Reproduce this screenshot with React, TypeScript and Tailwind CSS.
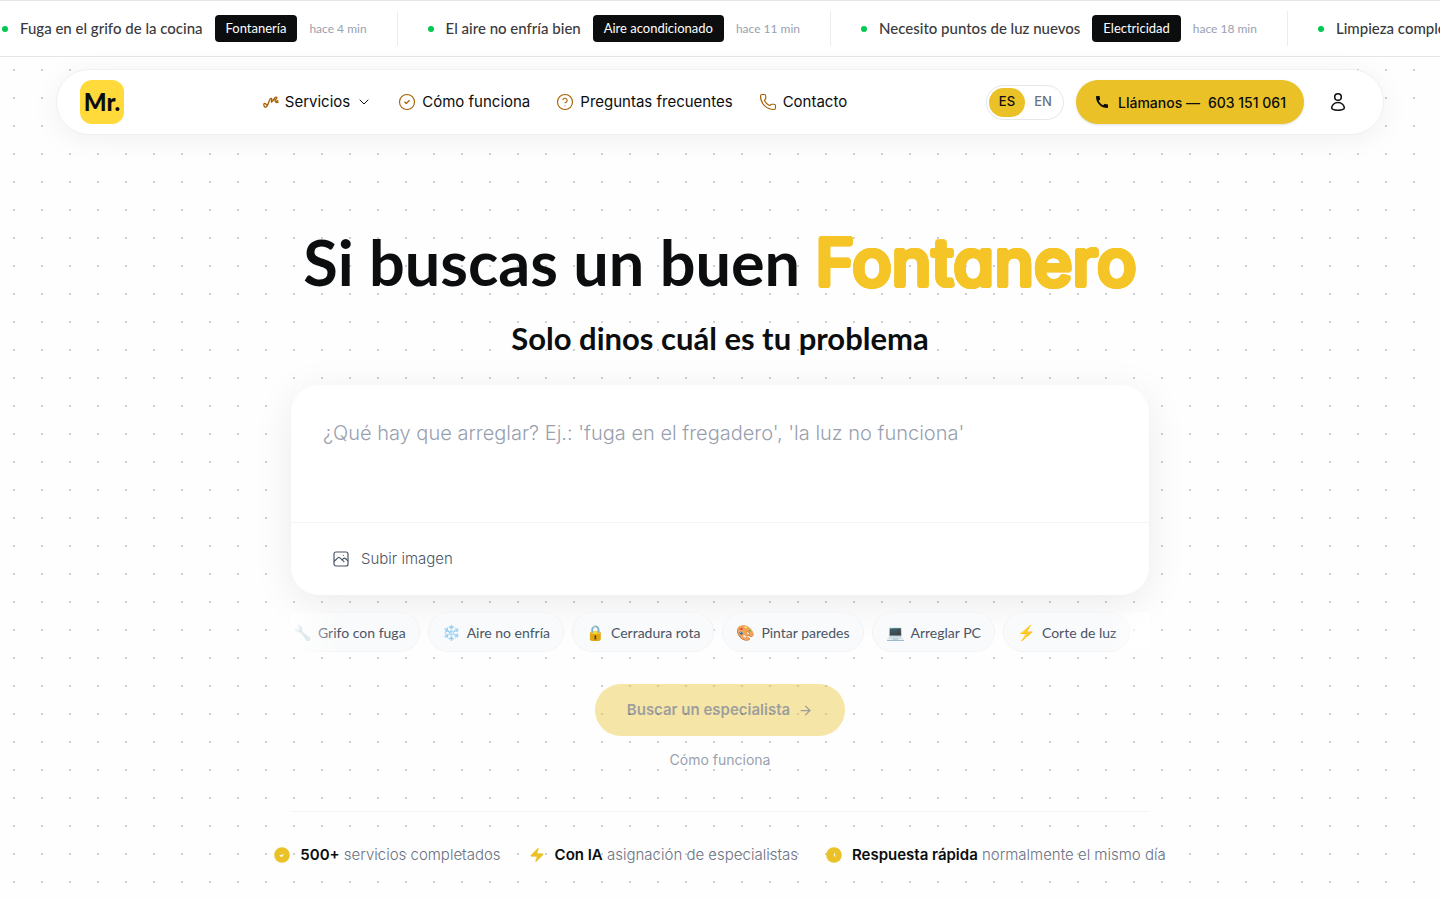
import React, { useState } from 'react';
import { ArrowRight, ChevronDown, CircleCheck, CircleQuestionMark, Phone, Zap } from 'lucide-react';
import { MdCall } from 'react-icons/md';

interface Request {
  title: string;
  service: string;
  time: string;
}

const requests: Request[] = [
  { title: 'Fuga en el grifo de la cocina', service: 'Fontanería', time: 'hace 4 min' },
  { title: 'El aire no enfría bien', service: 'Aire acondicionado', time: 'hace 11 min' },
  { title: 'Necesito puntos de luz nuevos', service: 'Electricidad', time: 'hace 18 min' },
  { title: 'Limpieza completa del piso', service: 'Limpieza', time: 'hace 25 min' },
];

const suggestions = [
  { emoji: '🔧', label: 'Grifo con fuga' },
  { emoji: '❄️', label: 'Aire no enfría' },
  { emoji: '🔒', label: 'Cerradura rota' },
  { emoji: '🎨', label: 'Pintar paredes' },
  { emoji: '💻', label: 'Arreglar PC' },
  { emoji: '⚡', label: 'Corte de luz' },
];

const ToolsIcon = () => (
  <svg width="16" height="16" viewBox="0 0 16 16" fill="none" stroke="currentColor" strokeWidth="1.3" strokeLinecap="round" strokeLinejoin="round">
    <path d="M1.200 9.600c1-.900 1.900 1.500 3.100 1.200M1 9.600c-.500 2 .300 3.600 1.700 3.500 2.600-.200 2.500-5.900 4.700-8.300.700-.700 1.500-.400 1.400.500 0 .700-.600 1.800-.300 2.700" />
    <path d="M8.500 8c1.900-.600 2.500-4.400 4.200-4.900 1.200-.300 1.500 1 .7 1.700-.8.600-1.600.9-1.500 1.700.2 1 1.700.9 2.900.2M12.300 7.200c.2 1.200 1.500 1.700 2.800.9" />
  </svg>
);

const UserIcon = () => (
  <svg width="20" height="20" viewBox="0 0 20 20" fill="none" stroke="currentColor" strokeWidth="1.5" strokeLinejoin="round">
    <circle cx="10" cy="5" r="3.3" />
    <path d="M10 10.6c3.7 0 6.3 2.6 6.3 5.2 0 1.500-2.800 2.400-6.300 2.400s-6.300-.900-6.300-2.400c0-2.600 2.600-5.200 6.300-5.200Z" />
  </svg>
);

const ImageIcon = () => (
  <svg width="20" height="20" viewBox="0 0 20 20" fill="none" stroke="currentColor" strokeWidth="1.2" strokeLinecap="round" strokeLinejoin="round">
    <rect x="3" y="3" width="14" height="14" rx="2" />
    <path d="m3.500 12 3.700-3.400c.5-.4 1-.4 1.400 0l4.400 4M11.300 11.200c.9-2 2-2.600 3.400-1.400l2 1.800" />
    <path d="M12.400 6.500h.01" />
  </svg>
);

const SealIcon = () => (
  <svg width="16" height="16" viewBox="0 0 16 16">
    <circle cx="8" cy="8" r="7.8" fill="#eac126" />
    <path d="m5.400 8.500 1.300-.8.8.6 3-2-2.400 3.500-1.100.3Z" fill="#fff" />
  </svg>
);

const ClockIcon = () => (
  <svg width="16" height="16" viewBox="0 0 16 16">
    <circle cx="8" cy="8" r="7.8" fill="#eac126" />
    <path d="m8.200 5.200.9 2.500.4 2.800-1.800-2.400Z" fill="#fff" />
  </svg>
);

const stats = [
  { icon: <SealIcon />, strong: '500+', text: 'servicios completados' },
  { icon: <Zap size={16} className="fill-[#eac126] text-[#eac126]" strokeWidth={1} />, strong: 'Con IA', text: 'asignación de especialistas' },
  { icon: <ClockIcon />, strong: 'Respuesta rápida', text: 'normalmente el mismo día' },
];

const Ticker = () => (
  <div className="overflow-hidden border-y border-[#e5e5e5] bg-white font-['Lato',sans-serif]">
    <ul className="-ml-7 flex h-[55px] w-max items-center">
      {requests.map((item) => (
        <li key={item.title} className="flex h-[35px] items-center gap-3 border-r border-[#ececec] px-[30px]">
          <span className="size-1.5 shrink-0 rounded-full bg-[#00c950]" />
          <span className="text-[15px] font-medium text-[#3a3a3c]">{item.title}</span>
          <span className="rounded bg-[#0b0d0e] px-[11px] py-1 text-[13px] leading-[19px] text-white">{item.service}</span>
          <span className="text-[12px] text-[#99a1af]">{item.time}</span>
        </li>
      ))}
    </ul>
  </div>
);

const Header = () => {
  const [lang, setLang] = useState('ES');

  return (
    <header className="mx-14 mt-3 flex h-[66px] items-center justify-between rounded-full border border-[#f0f0f2] bg-white px-[23px] shadow-[0_4px_30px_rgba(0,0,0,0.06)]">
      <a href="#" className="flex size-11 items-center justify-center rounded-xl bg-[#ffda3a] font-['Lato',sans-serif] text-2xl font-black text-[#0b0d0e]">
        Mr.
      </a>

      <nav className="flex items-center gap-[26px] text-[15px] text-[#0b0d0e]">
        <button className="flex items-center gap-1.5">
          <span className="text-[#a65f00]"><ToolsIcon /></span>
          Servicios
          <ChevronDown size={16} strokeWidth={1.5} />
        </button>
        <a href="#como-funciona" className="flex items-center gap-1.5">
          <CircleCheck size={18} strokeWidth={1.5} className="text-[#a65f00]" />
          Cómo funciona
        </a>
        <a href="#preguntas" className="flex items-center gap-1.5">
          <CircleQuestionMark size={18} strokeWidth={1.5} className="text-[#a65f00]" />
          Preguntas frecuentes
        </a>
        <a href="#contacto" className="flex items-center gap-1.5">
          <Phone size={18} strokeWidth={1.5} className="text-[#a65f00]" />
          Contacto
        </a>
      </nav>

      <div className="flex items-center gap-3">
        <div className="flex rounded-full border border-gray-200 p-0.5 text-[13px]">
          {['ES', 'EN'].map((code) => (
            <button
              key={code}
              onClick={() => setLang(code)}
              className={`h-[29px] w-9 rounded-full font-medium ${
                lang === code ? 'bg-[#eac126] text-[#0b0d0e]' : 'text-gray-500'
              }`}
            >
              {code}
            </button>
          ))}
        </div>
        <a
          href="tel:603151061"
          className="flex h-11 w-[228px] items-center justify-center gap-2 rounded-full bg-[#eac126] text-[14px] font-medium text-[#0b0d0e] shadow-sm"
        >
          <MdCall size={16} />
          <span>Llámanos —</span>
          <span>603 151 061</span>
        </a>
        <button aria-label="Mi cuenta" className="flex size-11 items-center justify-center text-[#0b0d0e]">
          <UserIcon />
        </button>
      </div>
    </header>
  );
};

const SearchForm = () => {
  const [problem, setProblem] = useState('');

  return (
    <form className="flex flex-col items-center" onSubmit={(e) => e.preventDefault()}>
      <div className="w-full overflow-hidden rounded-[28px] bg-white shadow-[0_8px_40px_rgba(0,0,0,0.08)]">
        <textarea
          aria-label="Describe tu problema"
          value={problem}
          onChange={(e) => setProblem(e.target.value)}
          placeholder="¿Qué hay que arreglar? Ej.: 'fuga en el fregadero', 'la luz no funciona'"
          className="block h-[137px] w-full resize-none px-8 py-8 text-xl leading-8 font-light text-gray-800 outline-none placeholder:text-[#99a1af]"
        />
        <div className="flex h-[73px] items-center border-t border-gray-100 px-6">
          <button type="button" className="flex items-center gap-2.5 px-4 text-[15px] font-light text-[#4a5565]">
            <ImageIcon />
            Subir imagen
          </button>
        </div>
      </div>

      {/* sugerencias rápidas */}
      <div className="relative mt-[17px] w-full overflow-hidden">
        <div className="-ml-3 flex w-max gap-2">
          {suggestions.map((s) => (
            <button
              key={s.label}
              type="button"
              onClick={() => setProblem(s.label)}
              className="flex h-10 items-center gap-1.5 rounded-full border border-gray-100 bg-[#f9fafb] px-[13px] font-['Lato',sans-serif] text-[14px] text-[#4a5565]"
            >
              <span className="text-[15px]">{s.emoji}</span>
              {s.label}
            </button>
          ))}
        </div>
        <div className="pointer-events-none absolute inset-y-0 left-0 w-12 bg-linear-to-r from-white to-transparent" />
        <div className="pointer-events-none absolute inset-y-0 right-0 w-10 bg-linear-to-l from-white to-transparent" />
      </div>

      <button
        type="submit"
        disabled={!problem.trim()}
        className="mt-8 flex h-[52px] items-center gap-2 rounded-full bg-[#eac126] px-8 text-[15px] font-semibold text-[#0b0d0e] disabled:opacity-40"
      >
        Buscar un especialista
        <ArrowRight size={15} />
      </button>
      <a href="#como-funciona" className="mt-3 text-[14px] leading-6 text-[#99a1af]">
        Cómo funciona
      </a>
    </form>
  );
};

export default function App() {
  return (
    <div className="min-h-screen bg-[#fefefe] bg-[radial-gradient(circle,#cfcfcf_1px,transparent_1px)] bg-[size:28px_28px] font-['Inter',sans-serif] text-[#0b0d0e]">
      <Ticker />
      <Header />

      <main className="mx-auto w-full max-w-[858px] pt-[91px]">
        <div className="text-center font-['Lato',sans-serif] font-bold">
          <h1 className="-mx-8 text-[63px] leading-[72px]">
            Si buscas un buen{' '}
            {/* la sombra engorda el trazo y redondea las esquinas */}
            <span className="font-['Inter',sans-serif] text-[66px] font-medium text-[#f5c527] [font-feature-settings:'cv11'] [text-shadow:2px_0_#f5c527,-2px_0_#f5c527,0_2px_#f5c527,0_-2px_#f5c527,1px_2px_#f5c527,-1px_2px_#f5c527,1px_-2px_#f5c527,-1px_-2px_#f5c527,2px_1px_#f5c527,-2px_1px_#f5c527,2px_-1px_#f5c527,-2px_-1px_#f5c527]">
              Fontanero
            </span>
          </h1>
          <h2 className="mt-5 text-[31px] leading-10">Solo dinos cuál es tu problema</h2>
        </div>

        <div className="mt-[27px]">
          <SearchForm />
        </div>

        <div className="mt-[39px] border-t border-gray-100 pt-8">
          <ul className="-mx-8 flex justify-center gap-7 text-[15px]">
            {stats.map((stat) => (
              <li key={stat.strong} className="flex items-center gap-2.5">
                {stat.icon}
                <span className="font-light text-[#6a7282]">
                  <strong className="font-semibold text-[#0b0d0e]">{stat.strong}</strong> {stat.text}
                </span>
              </li>
            ))}
          </ul>
        </div>
      </main>
    </div>
  );
}
